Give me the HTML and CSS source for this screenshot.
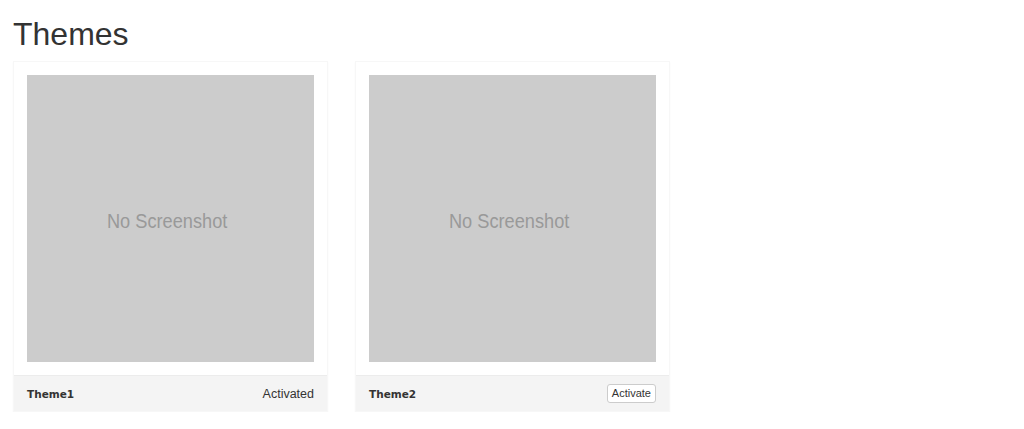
FILE: index.html
```html
<!DOCTYPE html>
<html>
<head>
<meta charset="utf-8">
<title>Themes</title>
<link rel="stylesheet" href="styles.css">
</head>
<body>
<h1 class="title">Themes</h1>
<div class="themes">
  <div class="theme-card">
    <div class="shot"><span>No Screenshot</span></div>
    <div class="theme-footer">
      <strong class="theme-name">Theme1</strong>
      <span class="status">Activated</span>
    </div>
  </div>
  <div class="theme-card">
    <div class="shot"><span>No Screenshot</span></div>
    <div class="theme-footer">
      <strong class="theme-name">Theme2</strong>
      <button class="activate-btn" type="button">Activate</button>
    </div>
  </div>
</div>
</body>
</html>
```

FILE: styles.css
```css
html, body {
  margin: 0;
  padding: 0;
  background: #fff;
}
body {
  font-family: "Liberation Sans", Arial, sans-serif;
  color: #333;
  padding: 0 13px;
}
.title {
  font-size: 32px;
  font-weight: 400;
  line-height: 35px;
  margin: 17px 0 9px;
  color: #333;
}
.themes {
  display: flex;
  gap: 27px;
}
.theme-card {
  width: 315px;
  box-sizing: border-box;
  border: 1px solid #f7f7f7;
  box-shadow: 0 1px 2px rgba(0, 0, 0, 0.03);
  background: #fff;
}
.shot {
  margin: 13px;
  height: 287px;
  background: #cccccc;
  display: flex;
  align-items: center;
  justify-content: center;
}
.shot span {
  font-size: 20px;
  color: #999;
  margin-top: 6px;
  margin-right: 7px;
  transform: scaleX(0.91);
}
.theme-footer {
  height: 35px;
  background: #f4f4f4;
  border-top: 1px solid #ececec;
  display: flex;
  align-items: center;
  justify-content: space-between;
  padding: 0 13px;
}
.theme-name {
  font-family: "DejaVu Sans", sans-serif;
  font-weight: 700;
  font-size: 10.5px;
  color: #333;
}
.status {
  font-size: 12.5px;
  color: #333;
}
.activate-btn {
  font-family: "Liberation Sans", Arial, sans-serif;
  font-size: 11px;
  color: #333;
  background: #fff;
  border: 1px solid #ccc;
  border-radius: 3px;
  padding: 2px 4px;
  height: 19px;
  line-height: 13px;
}
```
